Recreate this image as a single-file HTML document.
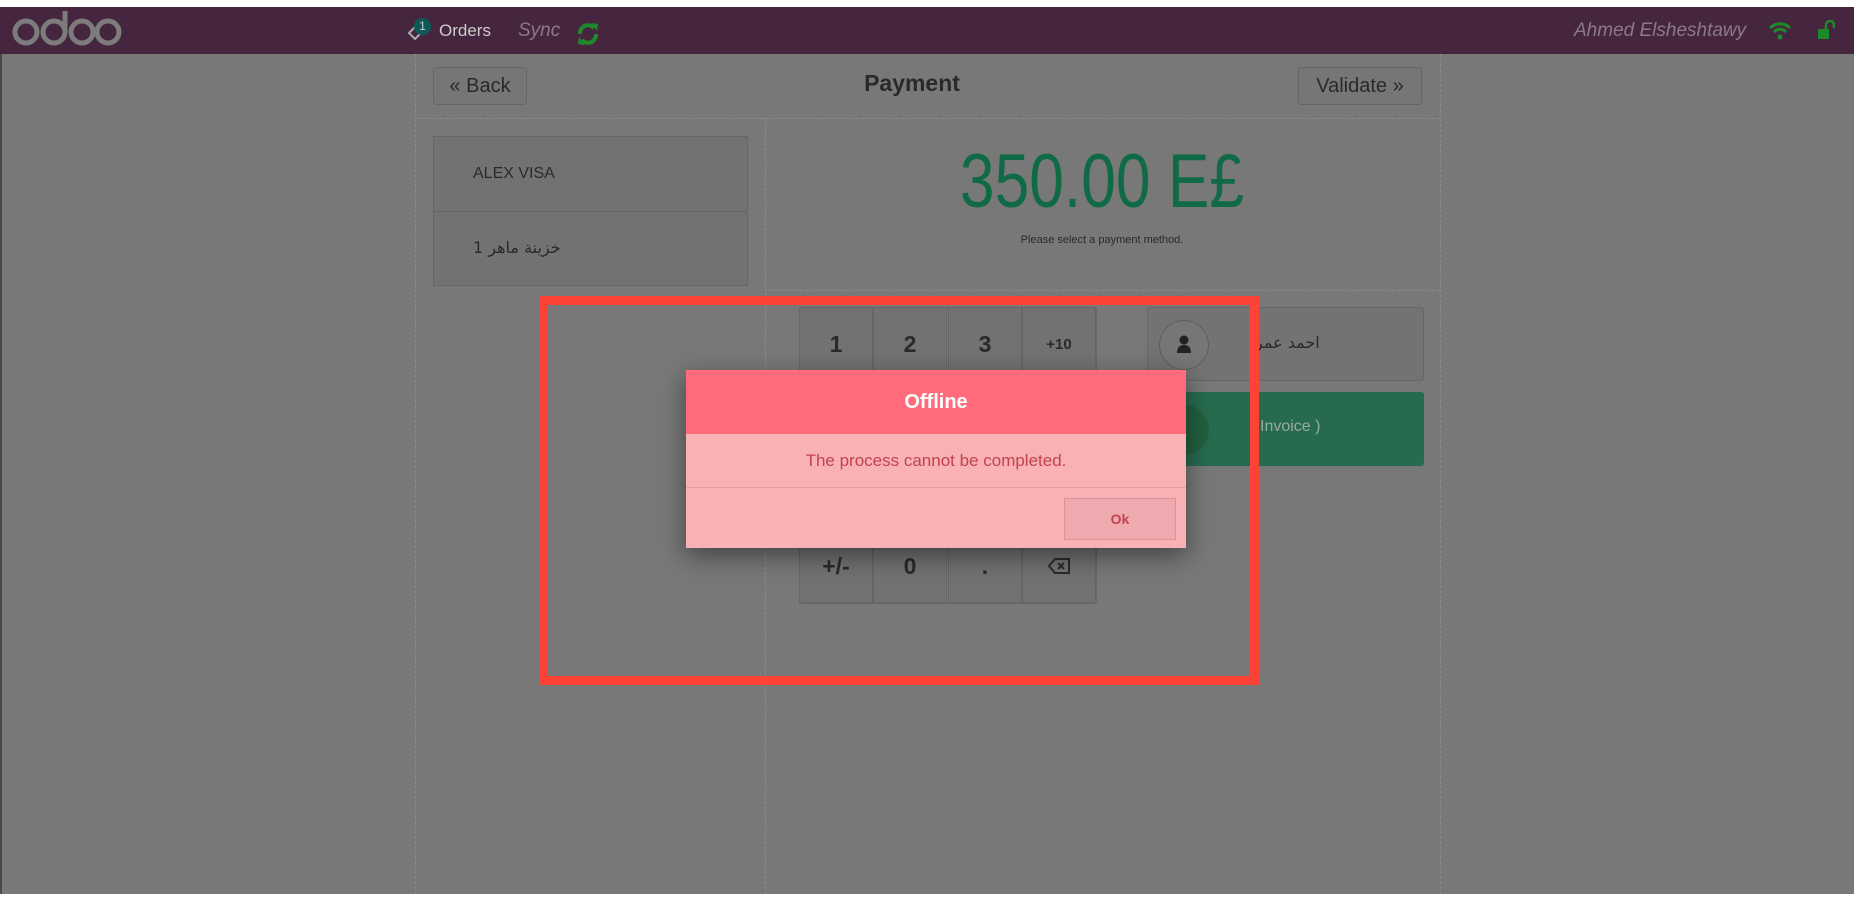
<!DOCTYPE html>
<html><head><meta charset="utf-8">
<style>
*{margin:0;padding:0;box-sizing:border-box}
body{width:1854px;height:900px;background:#fff;position:relative;overflow:hidden;font-family:"Liberation Sans","Noto Sans CJK SC",sans-serif}
.abs{position:absolute}
#main{left:0;top:7px;width:1854px;height:887px;background:#787878;border-left:2px solid #4a4a4a}
#nav{left:0;top:7px;width:1854px;height:47px;background:#46253f}
.btn{position:absolute;background:#767676;border:1px solid #666;border-radius:3px;color:#2a2a2a;font-size:20px;display:flex;align-items:center;justify-content:center}
.key{position:absolute;width:74px;height:74px;border:1px solid #666;background:#727272;color:#2a2a2a;font-size:23px;font-weight:bold;display:flex;align-items:center;justify-content:center}
.dv{position:absolute;border-left:1px dashed #8a8a8a}
.dh{position:absolute;border-top:1px dashed #8a8a8a}
</style></head><body>
<div id="main" class="abs"></div>
<div id="nav" class="abs"></div>
<svg class="abs" style="left:0;top:7px" width="130" height="47" viewBox="0 0 130 47">
<g fill="none" stroke="#7c7c7c" stroke-width="5">
<circle cx="26" cy="25" r="11"/>
<circle cx="54" cy="25" r="11"/>
<path d="M65 25 V4"/>
<circle cx="82" cy="25" r="11"/>
<circle cx="108" cy="25" r="11"/>
</g></svg>
<div class="abs" style="left:10px;top:12px;color:transparent;font-size:20px">odoo</div>
<svg class="abs" style="left:406px;top:24px" width="18" height="18" viewBox="0 0 18 18"><path d="M3 9 L9 3 L15 9 L9 15 Z" fill="none" stroke="#aaa" stroke-width="2"/></svg>
<div class="abs" style="left:414px;top:18px;width:17px;height:17px;border-radius:50%;background:#0b5a57;color:#ccc;font-size:12px;text-align:center;line-height:17px">1</div>
<div class="abs" style="left:439px;top:21px;color:#ccc;font-size:17px">Orders</div>
<div class="abs" style="left:518px;top:20px;color:#8a7a88;font-size:19px;font-style:italic">Sync</div>
<svg class="abs" style="left:576px;top:21px" width="24" height="26" viewBox="0 0 24 26"><path d="M4 13 A8 8 0 0 1 18 7" fill="none" stroke="#1d8a2a" stroke-width="4"/><path d="M15 2 L22 3 L21 10 Z" fill="#1d8a2a"/><path d="M20 13 A8 8 0 0 1 6 19" fill="none" stroke="#1d8a2a" stroke-width="4"/><path d="M9 24 L2 23 L3 16 Z" fill="#1d8a2a"/></svg>
<div class="abs" style="left:1574px;top:20px;color:#8a7a88;font-size:19px;font-style:italic">Ahmed Elsheshtawy</div>
<svg class="abs" style="left:1769px;top:22px" width="22" height="18" viewBox="0 0 22 18"><path d="M1 6 A14 14 0 0 1 21 6" fill="none" stroke="#1d8a2a" stroke-width="3"/><path d="M5 10 A8 8 0 0 1 17 10" fill="none" stroke="#1d8a2a" stroke-width="3"/><circle cx="11" cy="15" r="2.5" fill="#1d8a2a"/></svg>
<svg class="abs" style="left:1817px;top:20px" width="18" height="20" viewBox="0 0 18 20"><rect x="1" y="9" width="11" height="10" fill="#1d8a2a"/><path d="M9 9 V5 A4 4 0 0 1 17 5 V8" fill="none" stroke="#1d8a2a" stroke-width="2.5"/></svg>

<div class="dv" style="left:415px;top:54px;height:840px"></div>
<div class="dv" style="left:1440px;top:54px;height:840px"></div>
<div class="dh" style="left:415px;top:118px;width:1025px"></div>
<div class="dv" style="left:765px;top:118px;height:776px"></div>
<div class="dh" style="left:765px;top:290px;width:675px"></div>

<div class="btn" style="left:433px;top:67px;width:94px;height:38px">« Back</div>
<div class="abs" style="left:812px;top:70px;width:200px;text-align:center;color:#2a2a2a;font-size:23px;font-weight:bold">Payment</div>
<div class="btn" style="left:1298px;top:67px;width:124px;height:38px">Validate »</div>

<div class="abs" style="left:433px;top:136px;width:315px;height:150px;border:1px solid #666;background:#727272"></div>
<div class="abs" style="left:433px;top:211px;width:315px;border-top:1px solid #666"></div>
<div class="abs" style="left:473px;top:165px;color:#2a2a2a;font-size:16px">ALEX VISA</div>
<div class="abs" style="left:473px;top:238px;color:#2a2a2a;font-size:16px;font-family:'DejaVu Sans',sans-serif">خزينة ماهر 1</div>

<div class="abs" style="left:802px;top:137px;width:600px;text-align:center;color:#0f6a45;font-size:76px;line-height:90px;transform:scaleX(0.82)">350.00 E£</div>
<div class="abs" style="left:802px;top:234px;width:600px;text-align:center;color:#2a2a2a;font-size:11px">Please select a payment method.</div>

<div class="abs" style="left:799px;top:307px;width:298px;height:297px;border:1px solid #666;border-radius:3px"></div>
<div class="key" style="left:799px;top:307px">1</div>
<div class="key" style="left:873px;top:307px">2</div>
<div class="key" style="left:948px;top:307px">3</div>
<div class="key" style="left:1022px;top:307px;font-size:15px">+10</div>
<div class="key" style="left:799px;top:381px">4</div>
<div class="key" style="left:873px;top:381px">5</div>
<div class="key" style="left:948px;top:381px">6</div>
<div class="key" style="left:1022px;top:381px;font-size:15px">+20</div>
<div class="key" style="left:799px;top:455px">7</div>
<div class="key" style="left:873px;top:455px">8</div>
<div class="key" style="left:948px;top:455px">9</div>
<div class="key" style="left:1022px;top:455px;font-size:15px">+50</div>
<div class="key" style="left:799px;top:529px">+/-</div>
<div class="key" style="left:873px;top:529px">0</div>
<div class="key" style="left:948px;top:529px">.</div>
<div class="key" style="left:1022px;top:529px"><svg width="22" height="16" viewBox="0 0 22 16"><path d="M7 1 H21 V15 H7 L1 8 Z" fill="none" stroke="#2a2a2a" stroke-width="2"/><path d="M10 5 L16 11 M16 5 L10 11" stroke="#2a2a2a" stroke-width="2"/></svg></div>

<div class="abs" style="left:1147px;top:307px;width:277px;height:74px;border:1px solid #666;border-radius:3px;background:#737373"></div>
<div class="abs" style="left:1159px;top:320px;width:50px;height:50px;border:1px solid #5e5e5e;border-radius:50%;background:#767676"></div>
<svg class="abs" style="left:1176px;top:335px" width="16" height="19" viewBox="0 0 16 19"><circle cx="8" cy="5" r="4.5" fill="#222"/><path d="M1 18 Q1 10 8 10 Q15 10 15 18 Z" fill="#222"/></svg>
<div class="abs" style="left:1255px;top:333px;color:#2a2a2a;font-size:16px;font-family:'DejaVu Sans',sans-serif">احمد عمر</div>
<div class="abs" style="left:1147px;top:392px;width:277px;height:74px;border-radius:3px;background:#276b4f"></div>
<div class="abs" style="left:1159px;top:405px;width:50px;height:50px;border-radius:50%;background:#22603f"></div>
<div class="abs" style="left:1260px;top:418px;color:#9aa9a2;font-size:16px">Invoice )</div>

<div class="abs" style="left:539px;top:296px;width:720px;height:389px;border:9px solid #fd4336"></div>

<div class="abs" style="left:686px;top:370px;width:500px;height:178px;background:#f9b1b6;box-shadow:0 8px 24px rgba(0,0,0,0.45)"></div>
<div class="abs" style="left:686px;top:370px;width:500px;height:64px;background:#ff6b7b;color:#fff;font-size:20px;font-weight:bold;text-align:center;line-height:64px">Offline</div>
<div class="abs" style="left:686px;top:434px;width:500px;height:53px;color:#c2434f;font-size:17px;text-align:center;line-height:53px">The process cannot be completed.</div>
<div class="abs" style="left:686px;top:487px;width:500px;border-top:1px solid #f09aa2"></div>
<div class="abs" style="left:1064px;top:498px;width:112px;height:42px;background:#eeaaae;border:1px solid #e09499;color:#c2434f;font-size:14px;font-weight:bold;text-align:center;line-height:40px">Ok</div>
</body></html>
